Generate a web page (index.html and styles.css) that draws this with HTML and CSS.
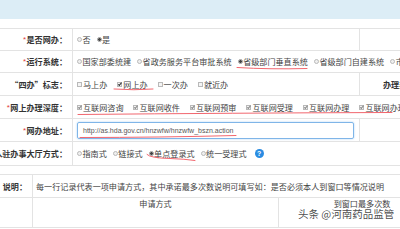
FILE: index.html
```html
<!DOCTYPE html>
<html lang="zh-CN">
<head>
<meta charset="utf-8">
<title>网办信息</title>
<link rel="stylesheet" href="styles.css">
</head>
<body>
<div class="page">
  <div class="band"></div>
  <div class="form">
    <div class="row r1">
      <div class="lbl"><span class="req">*</span>是否网办：</div>
      <div class="val narrow">
        <span class="opt"><span class="rd"></span>否</span>
        <span class="opt"><span class="rd on"></span>是</span>
      </div>
      <div class="side"></div>
    </div>
    <div class="row r2">
      <div class="lbl"><span class="req">*</span>运行系统：</div>
      <div class="val">
        <span class="opt"><span class="rd"></span>国家部委统建</span>
        <span class="opt"><span class="rd"></span>省政务服务平台审批系统</span>
        <span class="opt"><span class="rd on"></span>省级部门垂直系统</span>
        <span class="opt"><span class="rd"></span>省级部门自建系统</span>
        <span class="opt"><span class="rd"></span>市县自建系统</span>
      </div>
    </div>
    <div class="row r3">
      <div class="lbl">“四办”标志：</div>
      <div class="val narrow">
        <span class="opt ck"><span class="cb"></span>马上办</span>
        <span class="opt ck"><span class="cb on dark"></span>网上办</span>
        <span class="opt ck"><span class="cb"></span>一次办</span>
        <span class="opt ck"><span class="cb"></span>就近办</span>
      </div>
      <div class="side"><span class="side-lbl">办理类型：</span></div>
    </div>
    <div class="row r4">
      <div class="lbl"><span class="req">*</span>网上办理深度：</div>
      <div class="val">
        <span class="opt ck"><span class="cb on"></span>互联网咨询</span>
        <span class="opt ck"><span class="cb on"></span>互联网收件</span>
        <span class="opt ck"><span class="cb on"></span>互联网预审</span>
        <span class="opt ck"><span class="cb on"></span>互联网受理</span>
        <span class="opt ck"><span class="cb on"></span>互联网办理</span>
        <span class="opt ck"><span class="cb on"></span>互联网办理结果</span>
      </div>
    </div>
    <div class="row r5">
      <div class="lbl"><span class="req">*</span>网办地址：</div>
      <div class="val narrow">
        <div class="input">http://as.hda.gov.cn/hnzwfw/hnzwfw_bszn.action</div>
      </div>
      <div class="side"></div>
    </div>
    <div class="row r6">
      <div class="lbl"><span class="req">*</span>入驻办事大厅方式：</div>
      <div class="val">
        <span class="opt"><span class="rd"></span>指南式</span>
        <span class="opt"><span class="rd"></span>链接式</span>
        <span class="opt"><span class="rd on"></span>单点登录式</span>
        <span class="opt"><span class="rd"></span>统一受理式</span>
        <span class="help">?</span>
      </div>
    </div>
  </div>

  <div class="note">
    <div class="nrow n1">
      <div class="nlbl">说明：</div>
      <div class="ntext">每一行记录代表一项申请方式，其中承诺最多次数说明可填写如：是否必须本人到窗口等情况说明</div>
    </div>
    <div class="nrow n2">
      <div class="nlbl"></div>
      <div class="nhead wide">申请方式</div>
      <div class="nhead">到窗口最多次数</div>
    </div>
  </div>

  <svg class="marks" width="400" height="229" viewBox="0 0 400 229">
    <path d="M237 67.5 Q270 69.5 307 68.5" />
    <path d="M114 89 Q134 90.5 153 89" />
    <path d="M78 114.5 Q230 113 392 112.5" />
    <path d="M80 137.5 Q160 137.5 236 135.5" />
    <path d="M147 154.5 Q150 158 170 158.5 Q185 159 195 160.5" />
  </svg>

  <div class="wm">头条 @河南药品监管</div>
</div>
</body>
</html>
```

FILE: styles.css
```css
html, body {
  margin: 0;
  padding: 0;
  background: #ffffff;
}

.page {
  position: relative;
  width: 400px;
  height: 229px;
  overflow: hidden;
  font-family: "Noto Sans CJK SC", "Noto Sans", sans-serif;
  font-size: 8.1px;
  color: #444;
}

.band {
  height: 19px;
  background: #dcedf6;
  margin-bottom: 9px;
}

.form {
  width: 480px;
  border-top: 1px solid #e3e3e3;
}

.row {
  display: flex;
  border-bottom: 1px solid #e3e3e3;
}

.r1, .r2 { height: 21px; }
.r3, .r4, .r5 { height: 22px; }
.r6 { height: 23px; }

.lbl {
  flex: none;
  width: 73px;
  box-sizing: border-box;
  border-right: 1px solid #e3e3e3;
  display: flex;
  justify-content: flex-end;
  align-items: center;
  padding-right: 5px;
  white-space: nowrap;
  font-weight: bold;
  color: #333;
}

.req {
  color: #e23b3b;
  font-weight: normal;
  font-family: "Liberation Sans", sans-serif;
  font-size: 8px;
  margin-right: 0.5px;
}

.val {
  flex: 1;
  display: flex;
  align-items: center;
  padding-left: 4px;
  white-space: nowrap;
  min-width: 0;
}

.val.narrow {
  flex: none;
  width: 286px;
  box-sizing: border-box;
}

.side {
  flex: 1;
  border-left: 1px solid #e3e3e3;
  display: flex;
  align-items: center;
  padding-left: 23px;
}

.side-lbl {
  font-weight: bold;
  color: #333;
  white-space: nowrap;
}

.opt {
  display: inline-flex;
  align-items: center;
  margin-right: 6px;
  flex: none;
}

.opt.ck {
  margin-right: 10px;
}

.rd {
  display: inline-block;
  width: 5px;
  height: 5px;
  box-sizing: border-box;
  border: 1px solid #b9b9b9;
  border-radius: 50%;
  background: #efefef;
  margin-right: 0.5px;
}

.rd.on {
  background: radial-gradient(circle, #444 0 1.3px, #efefef 1.6px);
  border-color: #9a9a9a;
}

.cb {
  position: relative;
  display: inline-block;
  width: 5px;
  height: 5px;
  box-sizing: border-box;
  border: 1px solid #b9b9b9;
  background: #f4f4f4;
  margin-right: 1px;
}

.cb.on::after {
  content: "";
  position: absolute;
  left: 0.6px;
  top: -0.8px;
  width: 1.4px;
  height: 2.6px;
  border: solid #8a8a8a;
  border-width: 0 1px 1px 0;
  transform: rotate(40deg);
}

.cb.on.dark::after {
  border-color: #333;
}

.input {
  width: 277px;
  height: 17px;
  box-sizing: border-box;
  border: 1px solid #7fb5e8;
  border-radius: 2px;
  box-shadow: 0 0 2px rgba(102, 175, 233, 0.6);
  padding-left: 5px;
  display: flex;
  align-items: center;
  font-family: "Liberation Sans", sans-serif;
  font-size: 7px;
  color: #555;
}

.help {
  flex: none;
  width: 9px;
  height: 9px;
  border-radius: 50%;
  background: #2a8ce2;
  color: #fff;
  font-family: "Liberation Sans", sans-serif;
  font-weight: bold;
  font-size: 7px;
  line-height: 9px;
  text-align: center;
  margin-left: 2px;
}

.note {
  margin-top: 8px;
  width: 480px;
  border-top: 1px solid #e3e3e3;
}

.nrow {
  display: flex;
  border-bottom: 1px solid #e3e3e3;
}

.n1 { height: 22px; }
.n2 { height: 29px; }

.nlbl {
  flex: none;
  width: 33px;
  box-sizing: border-box;
  border-right: 1px solid #e3e3e3;
  display: flex;
  justify-content: flex-end;
  align-items: center;
  padding-right: 5px;
  font-weight: bold;
  color: #333;
  white-space: nowrap;
}

.ntext {
  flex: 1;
  display: flex;
  align-items: center;
  padding-left: 3px;
  white-space: nowrap;
  color: #444;
}

.nhead {
  flex: none;
  width: 166px;
  text-align: center;
  padding-top: 0;
  line-height: 12px;
  color: #444;
  white-space: nowrap;
}

.nhead.wide {
  width: 245px;
  border-right: 1px solid #e3e3e3;
}

.marks {
  position: absolute;
  left: 0;
  top: 0;
  pointer-events: none;
}

.marks path {
  fill: none;
  stroke: #ee4b55;
  stroke-width: 1;
  stroke-linecap: round;
  opacity: 0.85;
}

.wm {
  position: absolute;
  left: 298px;
  top: 206px;
  font-size: 10.5px;
  color: rgba(55, 55, 55, 0.9);
  text-shadow: 0 0 2px #fff, 0 0 1px #fff;
  white-space: nowrap;
  letter-spacing: 0;
}
```
